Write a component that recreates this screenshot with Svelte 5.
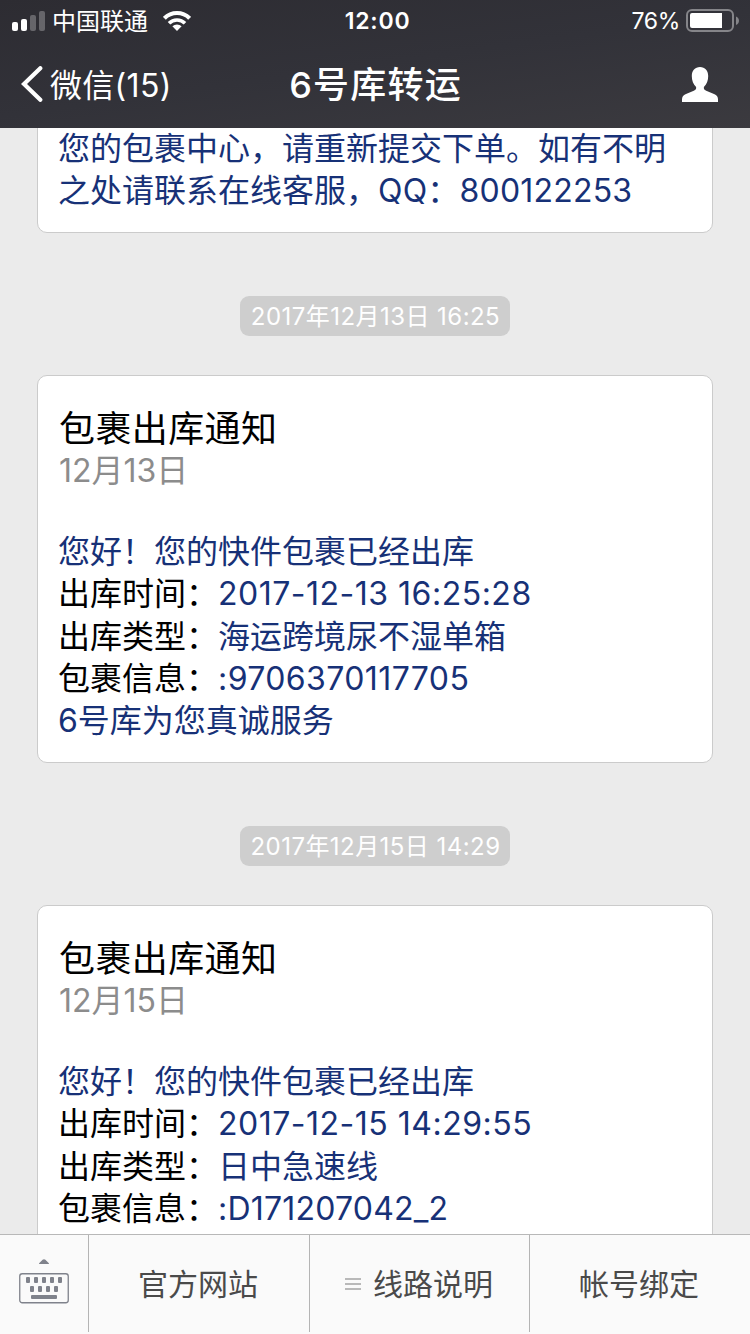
<script lang="ts">
  interface Line {
    label?: string;
    value: string;
    tone?: string;
  }

  interface Notice {
    time: string;
    date: string;
    lines: Line[];
  }

  const previous: Line[] = [
    { value: "您的包裹中心，请重新提交下单。如有不明" },
    { label: "之处请联系在线客服，", value: "QQ：800122253", tone: "qq" },
  ];

  const notices: Notice[] = [
    {
      time: "2017年12月13日 16:25",
      date: "12月13日",
      lines: [
        { value: "您好！您的快件包裹已经出库" },
        { label: "出库时间：", value: "2017-12-13 16:25:28", tone: "stamp" },
        { label: "出库类型：", value: "海运跨境尿不湿单箱" },
        { label: "包裹信息：", value: ":9706370117705", tone: "code" },
        { value: "6号库为您真诚服务" },
      ],
    },
    {
      time: "2017年12月15日 14:29",
      date: "12月15日",
      lines: [
        { value: "您好！您的快件包裹已经出库" },
        { label: "出库时间：", value: "2017-12-15 14:29:55", tone: "stamp" },
        { label: "出库类型：", value: "日中急速线" },
        { label: "包裹信息：", value: ":D171207042_2", tone: "mixed" },
      ],
    },
  ];

  const menu = [
    { name: "官方网站", sub: false },
    { name: "线路说明", sub: true },
    { name: "帐号绑定", sub: false },
  ];
</script>

<div class="screen" lang="zh-CN">
  <header>
    <div class="status">
      <div class="carrier">
        <svg class="signal" width="34" height="20" viewBox="0 0 34 20" fill="#fff">
          <rect x="0" y="11" width="6" height="9" rx="2" />
          <rect x="9" y="8" width="6" height="12" rx="2" />
          <rect x="18" y="4" width="6" height="16" rx="2" opacity=".27" />
          <rect x="27" y="0" width="6" height="20" rx="2" opacity=".27" />
        </svg>
        <span>中国联通</span>
        <svg class="wifi" width="28" height="20" viewBox="0 0 28 20" fill="none" stroke="#fff" stroke-width="4">
          <path d="M1.4 7.3a17.8 17.8 0 0 1 25.2 0" />
          <path d="M6 12.3a11.3 11.3 0 0 1 16 0" stroke-width="3.6" />
          <path d="M14 20l-4.6-4.7a6.5 6.5 0 0 1 9.2 0z" fill="#fff" stroke="none" />
        </svg>
      </div>
      <span class="clock">12:00</span>
      <div class="power">
        <span>76%</span>
        <svg width="54" height="24" viewBox="0 0 54 24">
          <rect x="1" y="1" width="46" height="21" rx="5" fill="none" stroke="#858589" stroke-width="2" />
          <path d="M4 6a2 2 0 0 1 2-2h30v15H6a2 2 0 0 1-2-2z" fill="#fff" />
          <path d="M50 7.5c4 1.5 4 7 0 8.5z" fill="#858589" />
        </svg>
      </div>
    </div>
    <nav>
      <button class="back">
        <svg width="22" height="36" viewBox="0 0 22 36" fill="none" stroke="#fff" stroke-width="4.2">
          <path d="M19.3 2.2L3 18l16.3 15.8" stroke-linecap="round" />
        </svg>
        <span>微信(15)</span>
      </button>
      <h1>6号库转运</h1>
      <button class="profile" aria-label="profile">
        <svg width="36" height="35" viewBox="0 0 36 35" fill="#fff">
          <path d="M18 0c-5 0-8.200 3.600-8.200 9 0 4.400 1.500 8.500 4.300 11 .3 1.800-.3 3-2.300 3.800L4 27c-3 1.300-4 3-4 5.500V35h36v-2.500c0-2.500-1-4.200-4-5.500l-7.800-3.200c-2-.8-2.600-2-2.300-3.800 2.800-2.500 4.300-6.600 4.300-11 0-5.400-3.200-9-8.200-9z" />
        </svg>
      </button>
    </nav>
  </header>

  {#snippet body(lines: Line[])}
    {#each lines as line}
      <p>{#if line.label}<span class:link={line.tone === "qq"}>{line.label}</span>{/if}<span class="link {line.tone ?? ''}">{line.value}</span></p>
    {/each}
  {/snippet}

  <main>
    <section class="card first">
      {@render body(previous)}
    </section>
    {#each notices as notice}
      <time>{notice.time}</time>
      <section class="card">
        <h2>包裹出库通知</h2>
        <div class="date">{notice.date}</div>
        {@render body(notice.lines)}
      </section>
    {/each}
  </main>

  <footer>
    <button class="keyboard" aria-label="keyboard">
      <svg width="50" height="46" viewBox="0 0 50 46" fill="#7f828b">
        <path d="M20 6q0-.6.6-1.2l3-3q1.4-1.200 2.800 0l3 3q.6.6.6 1.2z" />
        <rect x=".75" y="15.75" width="48.5" height="29" rx="2.500" fill="none" stroke="#7f828b" stroke-width="1.3" />
        {#each [7, 15, 23, 31, 39] as x}
          <rect {x} y="19" width="4" height="6" rx="1" />
        {/each}
        {#each [11, 19, 27, 35] as x}
          <rect {x} y="28" width="4" height="6" rx="1" />
        {/each}
        <rect x="12" y="37" width="26" height="4" rx="1" />
      </svg>
    </button>
    {#each menu as item}
      <button class="item">
        {#if item.sub}
          <svg width="16" height="12" viewBox="0 0 16 12" fill="#b9b9b9">
            <rect width="16" height="2" />
            <rect y="5" width="16" height="2" />
            <rect y="10" width="16" height="2" />
          </svg>
        {/if}
        <span>{item.name}</span>
      </button>
    {/each}
  </footer>
</div>

<style>
  :global(body) { margin: 0; }
  .screen {
    width: 750px;
    height: 1334px;
    display: flex;
    flex-direction: column;
    overflow: hidden;
    background: #ebebeb;
    font-family: Inter, "Noto Sans CJK SC", sans-serif;
    font-weight: 400;
  }
  button {
    display: flex;
    align-items: center;
    padding: 0;
    border: 0;
    background: none;
    color: inherit;
    font: inherit;
  }
  svg { display: block; flex: none; }

  header {
    flex: none;
    height: 128px;
    color: #fff;
    background: linear-gradient(172deg, #2d2c32, #323239 50%, #3b3a3f);
  }
  .status, nav {
    display: grid;
    grid-template-columns: 1fr auto 1fr;
    align-items: center;
  }
  .status {
    height: 40px;
    padding: 0 10px 0 12px;
    font-size: 24px;
    line-height: 40px;
  }
  .carrier, .power { display: flex; align-items: center; }
  .carrier span { height: 38px; margin-left: 6px; }
  .wifi { margin-left: 15px; }
  .clock { padding: 1px 0 0 3px; font-size: 23px; font-weight: 600; letter-spacing: .8px; }
  .power { justify-content: flex-end; gap: 6px; }
  .power span { padding-top: 1px; font-size: 23px; letter-spacing: -.3px; }
  nav {
    height: 88px;
    padding: 0 21px;
  }
  .back { gap: 7px; font-size: 32px; letter-spacing: .3px; }
  .back span { padding-bottom: 2px; }
  h1 {
    margin: 0;
    padding: 1px 0 0 1px;
    font-size: 36px;
    font-weight: 500;
    line-height: 50px;
    letter-spacing: 1.2px;
  }
  .profile { justify-self: end; margin-right: 11px; }

  main {
    flex: 1;
    min-height: 0;
    display: flex;
    flex-direction: column;
    align-items: center;
    overflow: hidden;
  }
  .card {
    flex: none;
    box-sizing: border-box;
    width: 676px;
    height: 388px;
    padding: 32px 20px 0;
    border: 1px solid #cbcbcb;
    border-radius: 10px;
    background: #fff;
    font-size: 32px;
    color: #000;
  }
  .card.first {
    height: 125px;
    margin-top: -20px;
    padding-top: 19px;
  }
  h2 {
    margin: 0;
    padding-left: 1px;
    font-size: 36px;
    font-weight: 400;
    line-height: 42px;
    letter-spacing: .4px;
  }
  .date { margin-bottom: 39px; padding-left: 1px; color: #8c8c8c; line-height: 42px; }
  p { margin: 0; height: 42.3px; line-height: 42.3px; white-space: nowrap; }
  .link { color: #173177; }
  .qq { letter-spacing: .2px; }
  .stamp { letter-spacing: .5px; }
  .code { letter-spacing: .4px; }
  .mixed { letter-spacing: .2px; }
  time {
    flex: none;
    height: 40px;
    margin: 63px 0 39px;
    padding: 0 10px 0 11px;
    border-radius: 9px;
    background: #cecece;
    color: #fff;
    font-size: 24px;
    line-height: 42px;
    letter-spacing: .45px;
  }

  footer {
    flex: none;
    box-sizing: border-box;
    height: 100px;
    display: grid;
    grid-template-columns: 88px 221px 220px 221px;
    border-top: 1px solid #b8b8b8;
    background: #fafafa;
    color: #4a4a4a;
    font-size: 30px;
  }
  .keyboard { justify-content: center; align-items: flex-start; padding-top: 23px; }
  .item {
    height: 97px;
    justify-content: center;
    gap: 13px;
    border-left: 1px solid #b4b4b4;
  }
  .item span { margin: 0 1px 4px -1px; }
</style>
